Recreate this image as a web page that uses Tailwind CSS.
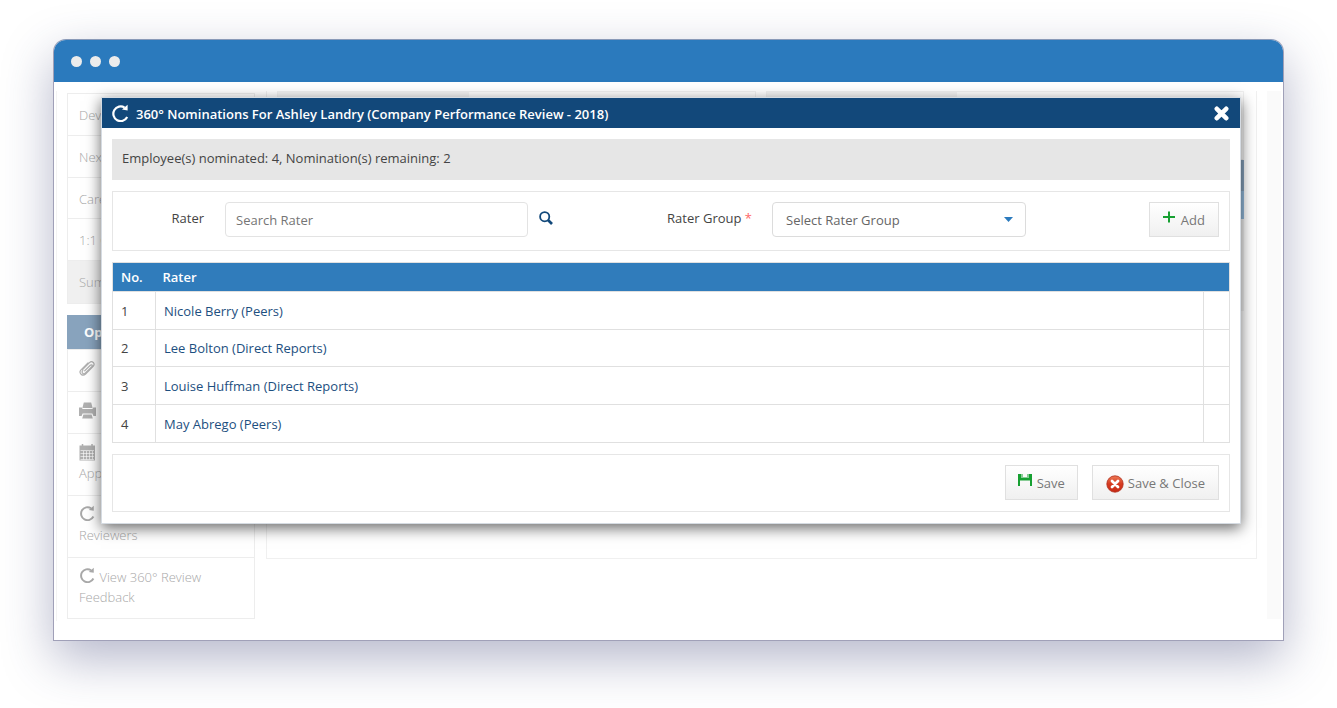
<!DOCTYPE html>
<html lang="en">
  <head>
    <meta charset="UTF-8" />
    <meta name="viewport" content="width=device-width, initial-scale=1.0" />
    <title>360° Nominations</title>
    <script src="https://cdn.jsdelivr.net/npm/@tailwindcss/browser@4"></script>
  </head>
  <body class="bg-white font-['Open_Sans','Noto_Sans',sans-serif] text-[13px] leading-5 text-[#555]">

    <!-- Shared icons -->
    <svg class="hidden">
      <symbol id="icon-repeat" viewBox="0 0 18 18">
        <path d="M16.200 13A7.300 7.300 0 1 1 13.600 3.600" fill="none" stroke="currentColor" stroke-width="2.200" />
        <path d="M16.600 0.800v5.600l-5.600-.8z" fill="currentColor" />
      </symbol>
    </svg>

    <div class="min-h-screen overflow-hidden px-[53px] pt-[39px] pb-[67px]">
      <!-- Browser window -->
      <div class="relative rounded-t-[13px] border border-[#a0a0b8] border-t-[#8a9ab8] bg-white shadow-[0_18px_50px_rgba(50,56,110,0.36)]">
        <div class="flex h-[42px] items-center gap-2 rounded-t-xl bg-[#2b7abd] px-[17px]">
          <span class="size-[11px] rounded-full bg-[#ececec]"></span>
          <span class="size-[11px] rounded-full bg-[#ececec]"></span>
          <span class="size-[11px] rounded-full bg-[#ececec]"></span>
        </div>

        <!-- Page behind the dialog -->
        <div class="pt-[9px] pr-0.5 pb-[19px] pl-0.5">
          <div class="flex border-l border-[#f3f3f3] pb-0.5 pl-2.5">
            <aside class="w-[188px] shrink-0 pt-0.5 font-light text-[#a8a8a8]">
              <nav class="border border-[#ededed]">
                <a href="#" class="block h-[42px] border-b border-[#ededed] px-[11px] py-[11px]">Dev</a>
                <a href="#" class="block h-[42px] border-b border-[#ededed] px-[11px] py-[11px]">Next</a>
                <a href="#" class="block h-[41px] border-b border-[#ededed] px-[11px] py-[11px]">Care</a>
                <a href="#" class="block h-[42px] border-b border-[#ededed] px-[11px] py-[11px]">1:1 C</a>
                <a href="#" class="block h-[42px] bg-[#f0f0f0] px-[11px] py-[11px]">Sum</a>
              </nav>
              <h2 class="mt-[11px] h-[34px] bg-[#88a3bd] px-[17px] py-[7px] font-bold text-white">Opt</h2>
              <nav class="border border-[#ededed]">
                <a href="#" aria-label="Attachments" class="block h-[42px] border-b border-[#ededed] px-[11px] py-[9px]">
                  <svg class="inline size-[17px] align-[-3px]" viewBox="0 0 17 17" fill="none" stroke="#b0b0b0" stroke-width="1.2" stroke-linecap="round">
                    <path d="M3.6 9.6l6.9-6.9c2.600-2.600 6.300.9 3.700 3.600L6.600 14C3.500 17-.8 12.900 2 9.800L9 2.800M5.700 10.800l5.600-5.500c1.200-1.200 2.600.1 1.500 1.400L6.400 13c-1.900 1.900-4.400-.4-2.600-2.500" />
                  </svg>
                </a>
                <a href="#" aria-label="Print" class="block h-[42px] border-b border-[#ededed] px-[11px] py-[9px]">
                  <svg class="inline size-[17px] align-[-3px]" viewBox="0 0 17 17" fill="#b0b0b0">
                    <path d="M4.800 0.500h7.400l1.400 5.500H3.400zM0 5.500h2.800L3.600 7h9.800l.8-1.500H17V14h-2.600l-1-2.500H3.600L2.600 14H0zM4.400 12.500h8.200l1.200 4H3.200z" />
                  </svg>
                </a>
                <a href="#" class="block h-[62px] border-b border-[#ededed] px-[11px] pt-[9px]">
                  <svg class="inline size-[17px] align-[-3px]" viewBox="0 0 17 17">
                    <path d="M0.500 1.500h15.500v15h-15.500z" fill="#b0b0b0" />
                    <path d="M3.500 0v2.500M13 0v2.500" stroke="#b0b0b0" stroke-width="1.500" />
                    <path d="M1.500 6.500h13.500M1.500 9.500h13.500M1.500 12.500h13.500M1.500 15.500h13.500M4.500 7v8.500M7.500 7v8.500M10.500 7v8.500M13.500 7v8.500" stroke="#fff" stroke-width="0.600" />
                  </svg>
                  <br />App
                </a>
                <a href="#" class="block h-[62px] border-b border-[#ededed] px-[11px] pt-[9px]">
                  <svg class="inline size-4 align-[-1px]"><use href="#icon-repeat" /></svg>
                  <br />Reviewers
                </a>
                <a href="#" class="block h-[60px] px-[11px] pt-[9px]">
                  <svg class="mr-px inline size-4 align-[-1px]"><use href="#icon-repeat" /></svg>
                  View 360° Review<br />Feedback
                </a>
              </nav>
            </aside>

            <main class="ml-[11px] h-[468px] flex-1 border border-t-0 border-[#f0f0f0] pr-3 pl-2.5">
              <div class="flex h-[69px] gap-2.5">
                <div class="flex flex-1 border border-[#f1f1f1]"><span class="w-2/5 bg-[#f5f5f5]"></span></div>
                <div class="flex flex-1 border border-[#f1f1f1]"><span class="w-2/5 bg-[#f5f5f5]"></span></div>
              </div>
              <div class="h-[31px] bg-[#88a3bd]"></div>
              <div class="h-7 bg-[#95bcde]"></div>
              <div class="h-[92px] bg-[#f3f3f3]"></div>
            </main>
            <div class="ml-2.5 w-[14px] bg-[#fafafa]"></div>
          </div>
        </div>

        <!-- Nominations dialog -->
        <section role="dialog" aria-labelledby="dialogTitle" class="absolute top-[57px] right-[42px] left-[47px] border border-[#d5dbe2] bg-white shadow-[0_4px_14px_rgba(0,0,0,0.6)]">
          <header class="flex h-[30px] items-center bg-[#12487a] pr-[11px] pl-[9px] text-white">
            <svg class="mr-[7px] size-[18px]"><use href="#icon-repeat" /></svg>
            <h1 id="dialogTitle" class="flex-1 pt-px font-semibold">360° Nominations For Ashley Landry (Company Performance Review - 2018)</h1>
            <button type="button" aria-label="Close">
              <svg class="size-[15px]" viewBox="0 0 15 15" fill="none" stroke="currentColor" stroke-width="4.600" stroke-linecap="round">
                <path d="M2.800 2.800l9.400 9.400M12.200 2.800l-9.400 9.400" />
              </svg>
            </button>
          </header>

          <form class="flex flex-col gap-[11px] p-2.5 pt-[11px] pb-[11px]" onsubmit="return false">
            <p class="h-[41px] bg-[#e6e6e6] px-2.5 pt-[9px] text-[#444]">Employee(s) nominated: 4, Nomination(s) remaining: 2</p>

            <!-- Add a rater -->
            <div class="grid h-[60px] grid-cols-[112fr_303fr_244fr_254fr_203fr] border border-[#e6e6e6] pt-2.5">
              <label for="rater" class="pt-1.5 pr-[21px] text-right text-[#444]">Rater</label>
              <input id="rater" type="text" placeholder="Search Rater" class="h-[35px] w-full rounded border border-[#e3e3e3] px-2.5 placeholder:text-[#757575]" />
              <div class="flex h-[31px] items-center justify-between pr-5 pl-[11px]">
                <button type="button" aria-label="Search" class="text-[#12487a]">
                  <svg class="size-[14px]" viewBox="0 0 14 14" fill="none" stroke="currentColor">
                    <circle cx="5.700" cy="5.700" r="4.600" stroke-width="1.800" />
                    <path d="M9 9l4 4" stroke-width="2.600" />
                  </svg>
                </button>
                <label for="raterGroup" class="text-[#444]">Rater Group <span class="text-[#f66]">*</span></label>
              </div>
              <div class="relative">
                <select id="raterGroup" class="h-[35px] w-full appearance-none rounded border border-[#dcdcdc] bg-white px-[13px] text-[#666]">
                  <option>Select Rater Group</option>
                </select>
                <svg class="pointer-events-none absolute top-[15px] right-[13px] h-[5px] w-[9px]" viewBox="0 0 9 5"><path d="M0 0h9L4.500 5z" fill="#2b7abd" /></svg>
              </div>
              <div class="pr-2.5 text-right">
                <button type="button" class="inline-flex h-[35px] items-center border border-[#e0e0e0] bg-linear-to-b from-white to-[#f0f0f0] px-[13px] text-[#777]">
                  <svg class="mr-1.5 mb-[5px] size-3" viewBox="0 0 12 12"><path d="M6 0.500v11M0 6h12" stroke="#17a032" stroke-width="2" /></svg>
                  Add
                </button>
              </div>
            </div>

            <table class="w-full border-collapse border border-[#e0e0e0]">
              <thead>
                <tr class="h-[29px] bg-[#307cbb] text-left text-white">
                  <th class="w-[43px] pl-2 font-semibold">No.</th>
                  <th class="pl-[7px] font-semibold" colspan="2">Rater</th>
                </tr>
              </thead>
              <tbody class="text-[#1d4f80]">
                <tr class="h-[38px] border-t border-[#e0e0e0]">
                  <td class="border-r border-[#e0e0e0] pl-2 text-[#444]">1</td>
                  <td class="pl-2"><a href="#">Nicole Berry (Peers)</a></td>
                  <td class="w-[26px] border-l border-[#e0e0e0]"></td>
                </tr>
                <tr class="h-[37px] border-t border-[#e0e0e0]">
                  <td class="border-r border-[#e0e0e0] pl-2 text-[#444]">2</td>
                  <td class="pl-2"><a href="#">Lee Bolton (Direct Reports)</a></td>
                  <td class="border-l border-[#e0e0e0]"></td>
                </tr>
                <tr class="h-[38px] border-t border-[#e0e0e0]">
                  <td class="border-r border-[#e0e0e0] pl-2 text-[#444]">3</td>
                  <td class="pl-2"><a href="#">Louise Huffman (Direct Reports)</a></td>
                  <td class="border-l border-[#e0e0e0]"></td>
                </tr>
                <tr class="h-[38px] border-t border-[#e0e0e0]">
                  <td class="border-r border-[#e0e0e0] pl-2 text-[#444]">4</td>
                  <td class="pl-2"><a href="#">May Abrego (Peers)</a></td>
                  <td class="border-l border-[#e0e0e0]"></td>
                </tr>
              </tbody>
            </table>

            <!-- Actions -->
            <div class="flex h-[58px] justify-end gap-[14px] border border-[#e6e6e6] px-2.5 pt-2.5">
              <button type="submit" class="inline-flex h-[35px] items-center border border-[#e0e0e0] bg-linear-to-b from-white to-[#f0f0f0] px-3 text-[#777]">
                <svg class="mr-[5px] mb-[5px] size-[14px]" viewBox="0 0 14 14"><path d="M0 1h3v3.500h8V1h3v12h-2V7.500H2V13H0z" fill="#17a032" /><path d="M3 1h2v3H3zM9 1h2v3H9z" fill="#17a032" opacity="0.500" /></svg>
                Save
              </button>
              <button type="submit" class="inline-flex h-[35px] items-center border border-[#e0e0e0] bg-linear-to-b from-white to-[#f0f0f0] px-[13px] text-[#777]">
                <svg class="mt-[3px] mr-1 size-[18px]" viewBox="0 0 18 18">
                  <defs><linearGradient id="red" x2="0" y2="1"><stop stop-color="#ee7a55" /><stop offset="0.500" stop-color="#d53a20" /><stop offset="1" stop-color="#c82a14" /></linearGradient></defs>
                  <circle cx="9" cy="9" r="8.200" fill="url(#red)" stroke="#b03020" stroke-width="0.800" />
                  <path d="M6 6l6 6M12 6l-6 6" stroke="#fff" stroke-width="2.800" stroke-linecap="round" />
                </svg>
                Save &amp; Close
              </button>
            </div>
          </form>
        </section>
      </div>
    </div>
  </body>
</html>
